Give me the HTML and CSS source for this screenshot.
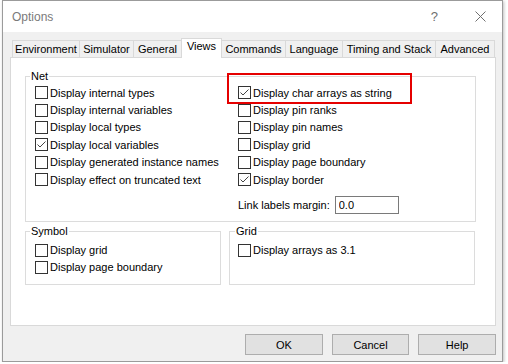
FILE: index.html
```html
<!DOCTYPE html>
<html>
<head>
    <title>Options</title>
    <link rel="stylesheet" href="styles.css">
</head>
<body>
    <div class="window">
        <div class="titlebar">
            <span class="title">Options</span>
            <span class="help">?</span>
            <svg class="close" width="11" height="11" viewBox="0 0 11 11">
                <path d="M0.5 0.5 L10.5 10.5 M10.5 0.5 L0.5 10.5" stroke="#6f6f6f" stroke-width="1" fill="none"/>
            </svg>
        </div>
        <div class="content">
            <div class="tabs">
                <div class="tab tab-env">Environment</div>
                <div class="tab tab-sim">Simulator</div>
                <div class="tab tab-gen">General</div>
                <div class="tab tab-views active">Views</div>
                <div class="tab tab-cmd">Commands</div>
                <div class="tab tab-lang">Language</div>
                <div class="tab tab-timing">Timing and Stack</div>
                <div class="tab tab-adv">Advanced</div>
            </div>
            <div class="panel">
                <fieldset class="group net">
                    <legend>Net</legend>
                    <div class="cols">
                        <div class="col left">
                            <label class="row"><span class="check"></span>Display internal types</label>
                            <label class="row"><span class="check"></span>Display internal variables</label>
                            <label class="row"><span class="check"></span>Display local types</label>
                            <label class="row"><span class="check checked"><svg width="11" height="11" viewBox="0 0 11 11"><polyline points="1.5,5.5 4,8 9.5,2.5" stroke="#444" stroke-width="1" fill="none"/></svg></span>Display local variables</label>
                            <label class="row"><span class="check"></span>Display generated instance names</label>
                            <label class="row"><span class="check"></span>Display effect on truncated text</label>
                        </div>
                        <div class="col right">
                            <label class="row highlight"><span class="check checked"><svg width="11" height="11" viewBox="0 0 11 11"><polyline points="1.5,5.5 4,8 9.5,2.5" stroke="#444" stroke-width="1" fill="none"/></svg></span>Display char arrays as string</label>
                            <label class="row"><span class="check"></span>Display pin ranks</label>
                            <label class="row"><span class="check"></span>Display pin names</label>
                            <label class="row"><span class="check"></span>Display grid</label>
                            <label class="row"><span class="check"></span>Display page boundary</label>
                            <label class="row"><span class="check checked"><svg width="11" height="11" viewBox="0 0 11 11"><polyline points="1.5,5.5 4,8 9.5,2.5" stroke="#444" stroke-width="1" fill="none"/></svg></span>Display border</label>
                            <div class="link-row">
                                <span>Link labels margin:</span>
                                <input type="text" value="0.0">
                            </div>
                        </div>
                    </div>
                </fieldset>
                <div class="lower">
                    <fieldset class="group symbol">
                        <legend>Symbol</legend>
                        <label class="row"><span class="check"></span>Display grid</label>
                        <label class="row"><span class="check"></span>Display page boundary</label>
                    </fieldset>
                    <fieldset class="group grid">
                        <legend>Grid</legend>
                        <label class="row"><span class="check"></span>Display arrays as 3.1</label>
                    </fieldset>
                </div>
            </div>
            <div class="buttons">
                <button>OK</button>
                <button>Cancel</button>
                <button>Help</button>
            </div>
        </div>
    </div>
</body>
</html>
```

FILE: styles.css
```css
body {
    margin: 0;
    background-color: #ffffff;
    font-family: "Liberation Sans", Arial, sans-serif;
    font-size: 11px;
    color: #000000;
}

.window {
    margin-left: 2px;
    width: 501px;
    height: 362px;
    box-sizing: border-box;
    border: 1px solid #9b9b9b;
    background-color: #f0f0f0;
    box-shadow: 1px 1px 3px rgba(0, 0, 0, 0.25);
}

.titlebar {
    height: 31px;
    display: flex;
    align-items: center;
    padding-left: 9px;
    background-color: #ffffff;
    color: #7a7a7a;
    font-size: 12px;
}

.help {
    margin-left: auto;
    font-size: 13px;
    color: #6f6f6f;
}

.close {
    margin-left: 37px;
    margin-right: 16px;
}

.content {
    padding: 6px 6px 0 7px;
}

/* tab strip */
.tabs {
    display: flex;
    align-items: flex-end;
    height: 19px;
    padding-left: 2px;
}

.tab {
    height: 17px;
    box-sizing: border-box;
    border: 1px solid #d9d9d9;
    border-bottom: none;
    margin-right: -1px;
    line-height: 16px;
    text-align: center;
    white-space: nowrap;
    background-color: #f0f0f0;
}

.tab-env { width: 68px; }
.tab-sim { width: 55px; }
.tab-gen { width: 49px; }
.tab-views { width: 41px; }
.tab-cmd { width: 65px; }
.tab-lang { width: 58px; }
.tab-timing { width: 94px; }
.tab-adv { width: 60px; }

.tab.active {
    position: relative;
    z-index: 1;
    height: 20px;
    margin-bottom: -1px;
    line-height: 15px;
    background-color: #ffffff;
}

.panel {
    height: 269px;
    box-sizing: border-box;
    border: 1px solid #d9d9d9;
    background-color: #ffffff;
    padding: 12px 0 0 14px;
}

.group {
    margin: 0;
    min-width: 0;
    box-sizing: border-box;
    border: 1px solid #dcdcdc;
}

.group legend {
    padding: 0 1px;
    margin-left: -5px;
    line-height: 12px;
}

.net {
    width: 451px;
    padding: 2px 9px 7px 9px;
}

.cols {
    display: flex;
}

.col.left {
    width: 203px;
}

.row {
    height: 17.4px;
    display: flex;
    align-items: center;
    white-space: nowrap;
}

.check {
    width: 13px;
    height: 13px;
    box-sizing: border-box;
    border: 1px solid #333333;
    background-color: #ffffff;
    margin-right: 2px;
    flex: none;
}

.check svg {
    display: block;
}

.highlight {
    position: relative;
}

.highlight::after {
    content: "";
    position: absolute;
    left: -11px;
    top: -11px;
    width: 185px;
    height: 31px;
    box-sizing: border-box;
    border: 2px solid #e50000;
}

.link-row {
    display: flex;
    align-items: center;
    margin-top: 8px;
}

.link-row input {
    width: 64px;
    height: 18px;
    box-sizing: border-box;
    margin: 0 0 0 5px;
    padding: 0 3px;
    border: 1px solid #7a7a7a;
    font: inherit;
    color: #000000;
}

.lower {
    display: flex;
    gap: 8px;
    margin-top: 3px;
}

.symbol {
    width: 196px;
    padding: 4px 9px 8px 9px;
}

.grid {
    width: 246px;
    padding: 4px 8px 8px 8px;
}

.grid legend {
    margin-left: -3px;
}

.buttons {
    display: flex;
    gap: 9px;
    margin-top: 8px;
    padding-left: 235px;
}

.buttons button {
    width: 78px;
    height: 21px;
    padding: 0;
    border: 1px solid #adadad;
    background-color: #e1e1e1;
    font: inherit;
    color: #000000;
}
```
